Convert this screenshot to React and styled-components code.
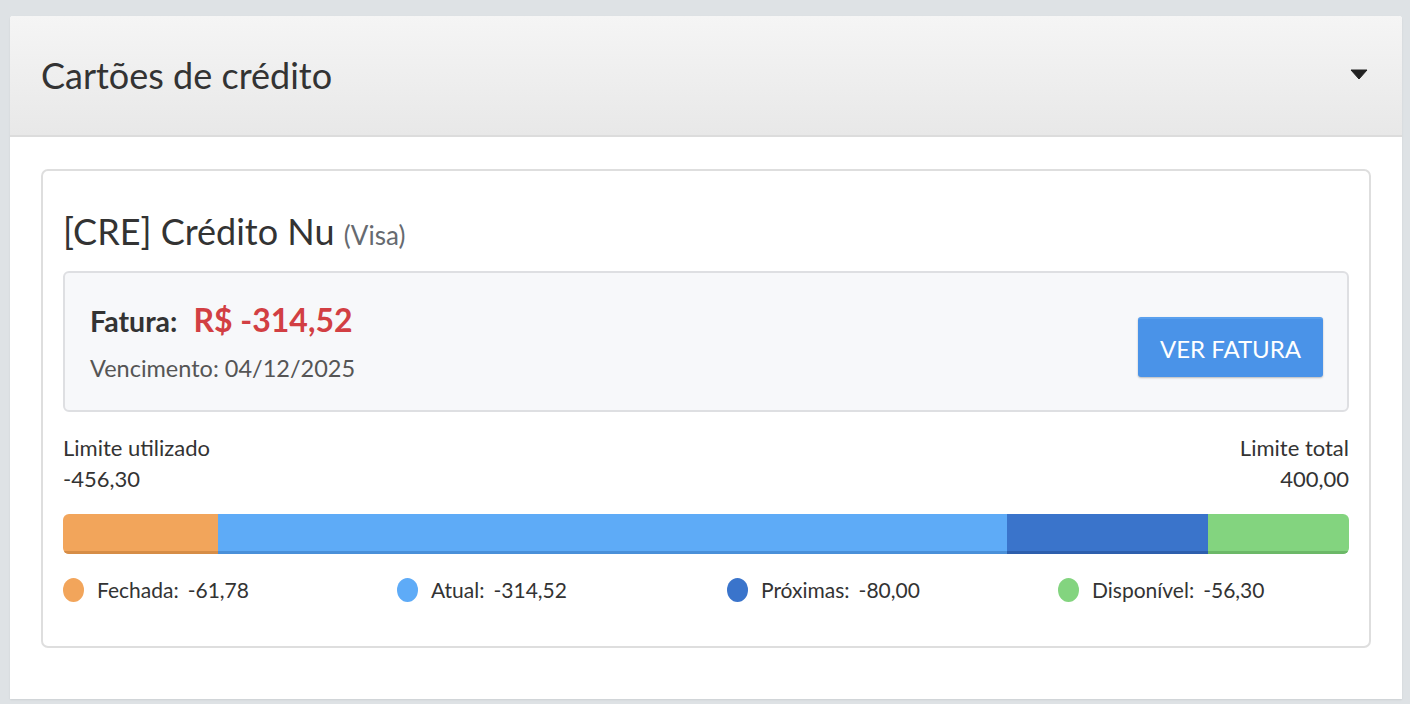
import styled, { createGlobalStyle } from "styled-components"

const GlobalStyle = createGlobalStyle`
  html, body {
    margin: 0;
    padding: 0;
    background: #dee2e5;
    font-family: Lato, "Open Sans", sans-serif;
    color: #333;
  }
`

const segments = [
  { key: 'fechada', label: 'Fechada:', value: '-61,78', color: '#f2a55b', edge: '#d68d47', width: 155 },
  { key: 'atual', label: 'Atual:', value: '-314,52', color: '#5eabf7', edge: '#4a90d9', width: 790 },
  { key: 'proximas', label: 'Próximas:', value: '-80,00', color: '#3a74cb', edge: '#2d5fad', width: 201 },
  { key: 'disponivel', label: 'Disponível:', value: '-56,30', color: '#83d47f', edge: '#6cb868', width: 141 },
]

const total = segments.reduce((s, x) => s + x.width, 0)

const Caret = () => (
  <svg width="18" height="11" viewBox="0 0 18 11">
    <path d="M1 1 H17 L9 10 Z" fill="#222" stroke="#222" strokeWidth="1" strokeLinejoin="round" />
  </svg>
)

const App = () => {
  return (
    <Page>
      <GlobalStyle />
      <Panel>
        <PanelHeader>
          <PanelTitle>Cartões de crédito</PanelTitle>
          <Caret />
        </PanelHeader>
        <PanelBody>
          <Card>
            <CardTitle>
              [CRE] Crédito Nu <Brand>(Visa)</Brand>
            </CardTitle>

            <InvoiceBox>
              <div>
                <InvoiceLine>
                  <InvoiceLabel>Fatura:</InvoiceLabel>
                  <InvoiceValue>R$ -314,52</InvoiceValue>
                </InvoiceLine>
                <DueDate>Vencimento: 04/12/2025</DueDate>
              </div>
              <Button type='button'>VER FATURA</Button>
            </InvoiceBox>

            <LimitRow>
              <LimitCol>
                <span>Limite utilizado</span>
                <span>-456,30</span>
              </LimitCol>
              <LimitCol align='right'>
                <span>Limite total</span>
                <span>400,00</span>
              </LimitCol>
            </LimitRow>

            <Bar>
              {segments.map(s => (
                <Segment
                  key={s.key}
                  color={s.color}
                  edge={s.edge}
                  style={{ width: `${(s.width / total) * 100}%` }}
                />
              ))}
            </Bar>

            <Legend>
              {segments.map(s => (
                <LegendItem key={s.key}>
                  <Dot color={s.color} />
                  <span>{s.label}</span>
                  <LegendValue>{s.value}</LegendValue>
                </LegendItem>
              ))}
            </Legend>
          </Card>
        </PanelBody>
      </Panel>
    </Page>
  )
}

const Page = styled.div`
  padding: 16px 8px 6px 10px;
  min-height: 704px;
  box-sizing: border-box;
`

const Panel = styled.section`
  background: #fff;
  border-radius: 3px 3px 0 0;
  box-shadow: 0 1px 2px rgba(0, 0, 0, 0.08);
`

const PanelHeader = styled.header`
  height: 119px;
  display: flex;
  align-items: center;
  justify-content: space-between;
  padding: 0 34px 0 31px;
  background: linear-gradient(to bottom, #f5f5f5, #e8e8e8);
  border-bottom: 2px solid #dcdcdc;
  border-radius: 3px 3px 0 0;
  svg {
    margin-top: -2px;
  }
`

const PanelTitle = styled.h1`
  margin: 0;
  font-size: 36px;
  font-weight: 400;
  color: #333;
  margin-top: -2px;
`

const PanelBody = styled.div`
  padding: 32px 31px 51px 31px;
`

const Card = styled.div`
  border: 2px solid #dedede;
  border-radius: 7px;
  padding: 38px 20px 43px 20px;
`

const CardTitle = styled.h2`
  margin: 0 0 14px 0;
  font-size: 36px;
  font-weight: 400;
  line-height: 44px;
  color: #333;
`

const Brand = styled.span`
  font-size: 26px;
  color: #666a70;
`

const InvoiceBox = styled.div`
  display: flex;
  align-items: center;
  justify-content: space-between;
  background: #f7f8fa;
  border: 2px solid #dedfe2;
  border-radius: 6px;
  padding: 22px 24px 22px 25px;
  height: 141px;
  box-sizing: border-box;
`

const InvoiceLine = styled.div`
  display: flex;
  align-items: baseline;
  gap: 16px;
  line-height: 40px;
`

const InvoiceLabel = styled.span`
  font-size: 28.5px;
  font-weight: 700;
  color: #333;
`

const InvoiceValue = styled.span`
  font-size: 32px;
  font-weight: 700;
  color: #d23f43;
`

const DueDate = styled.div`
  margin-top: 12px;
  font-size: 23.5px;
  line-height: 30px;
  color: #555;
`

const Button = styled.button`
  font-family: Lato, sans-serif;
  font-size: 24px;
  color: #fff;
  background: #4a93e8;
  border: none;
  border-top: 2px solid #5aa0ee;
  border-radius: 3px;
  width: 185px;
  height: 60px;
  box-shadow: 0 1px 2px rgba(0, 0, 0, 0.25);
  margin-top: 11px;
  cursor: pointer;
`

const LimitRow = styled.div`
  display: flex;
  justify-content: space-between;
  margin-top: 22px;
`

const LimitCol = styled.div`
  display: flex;
  flex-direction: column;
  gap: 4px;
  font-size: 22px;
  line-height: 27px;
  color: #333;
  text-align: ${p => p.align || 'left'};
`

const Bar = styled.div`
  display: flex;
  height: 40px;
  margin-top: 22px;
  border-radius: 6px;
  overflow: hidden;
`

const Segment = styled.div`
  background: ${p => p.color};
  box-shadow: inset 0 -3px 0 ${p => p.edge};
`

const Legend = styled.div`
  display: grid;
  grid-template-columns: 334px 330px 331px 1fr;
  margin-top: 22px;
`

const LegendItem = styled.div`
  display: flex;
  align-items: center;
  font-size: 21px;
  line-height: 27px;
  color: #333;
  gap: 13px;
`

const Dot = styled.span`
  width: 21px;
  height: 24px;
  border-radius: 50%;
  background: ${p => p.color};
  flex-shrink: 0;
`

const LegendValue = styled.span`
  margin-left: -4px;
`

export default App
